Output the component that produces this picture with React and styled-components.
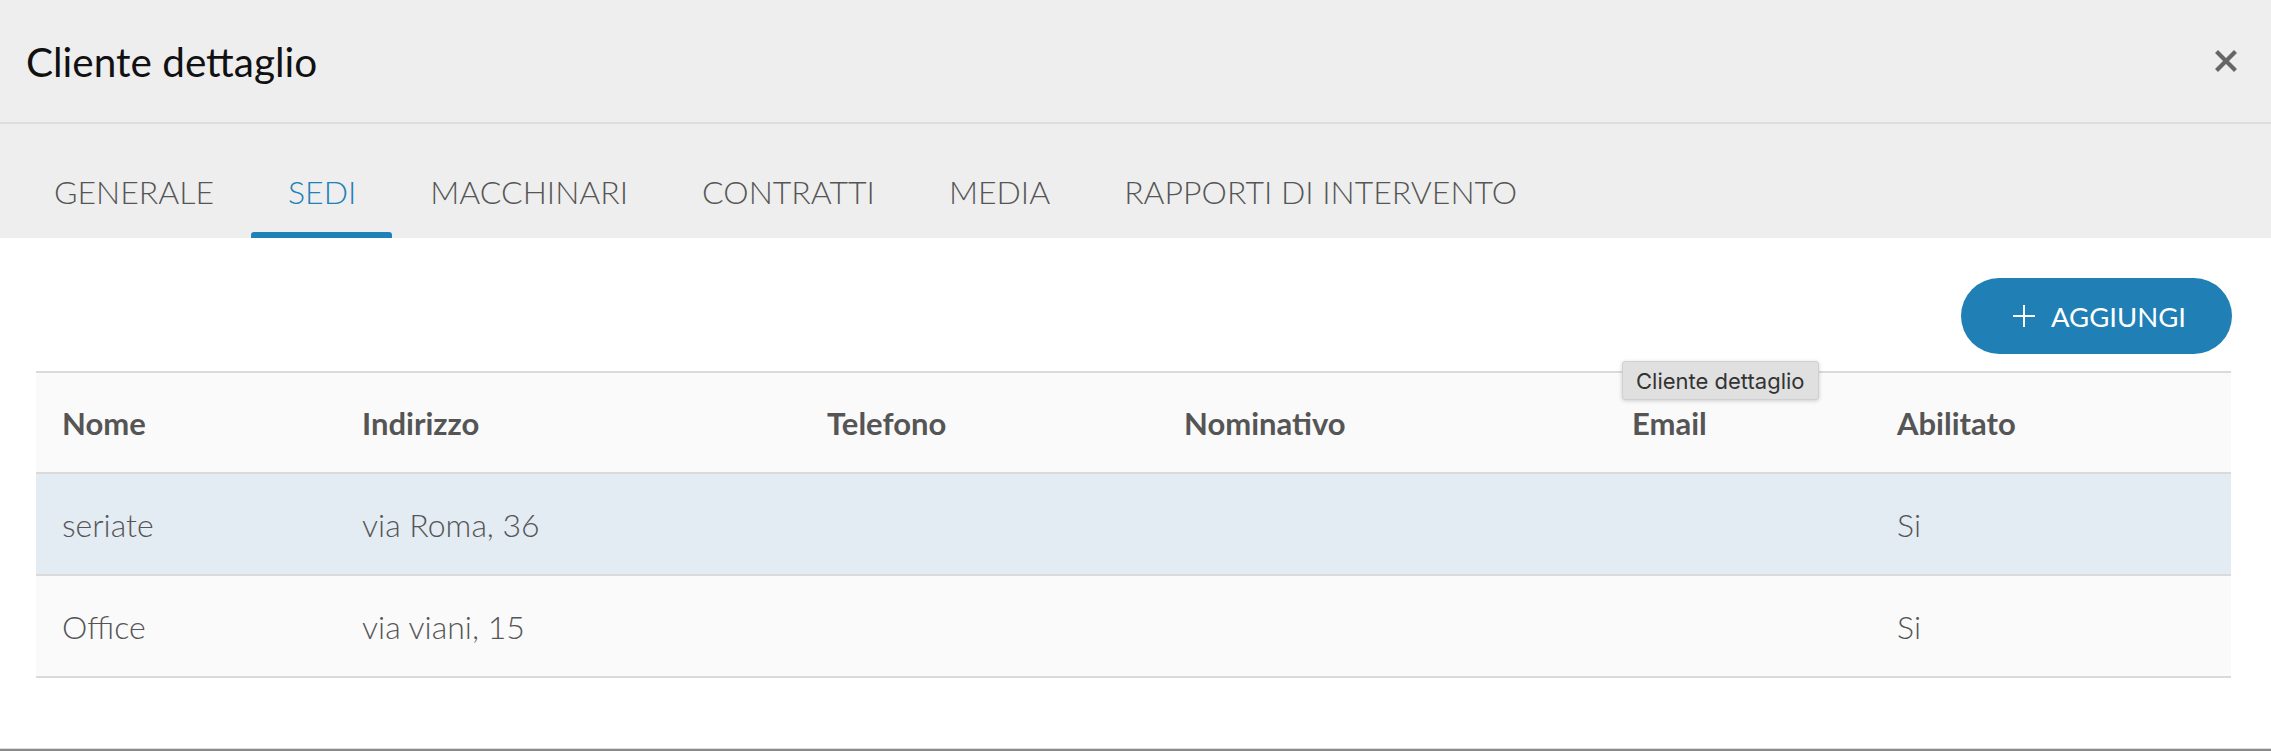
import React from "react";
import styled, { createGlobalStyle } from "styled-components";

const GlobalStyle = createGlobalStyle`
  html, body { margin: 0; padding: 0; background: #ffffff; }
  body { font-family: Lato, "Open Sans", sans-serif; }
  * { box-sizing: border-box; }
`;

const Page = styled.div`
  display: flex;
  flex-direction: column;
  height: 751px;
  background: #ffffff;
`;

const Header = styled.header`
  height: 124px;
  background: #eeeeee;
  border-bottom: 2px solid #dedede;
  display: flex;
  align-items: center;
  justify-content: space-between;
  padding: 0 33px 0 26px;
`;

const Title = styled.h2`
  margin: 0;
  font-family: Lato, sans-serif;
  font-weight: 400;
  font-size: 40.5px;
  color: #111111;
  letter-spacing: 0;
`;

const CloseButton = styled.button`
  border: none;
  background: transparent;
  padding: 0;
  width: 24px;
  height: 24px;
  display: flex;
  align-items: center;
  justify-content: center;
  cursor: pointer;
`;

const TabBar = styled.nav`
  height: 114px;
  background: #eeeeee;
  display: flex;
  align-items: flex-end;
  padding-left: 17px;
`;

const Tab = styled.div`
  position: relative;
  height: 94px;
  padding: 0 37px;
  display: flex;
  align-items: center;
  font-family: Lato, sans-serif;
  font-weight: 300;
  font-size: 32px;
  text-transform: uppercase;
  color: ${(p) => (p.$active ? "#2080b8" : "#555555")};

  &::after {
    content: "";
    display: ${(p) => (p.$active ? "block" : "none")};
    position: absolute;
    left: 0;
    right: 1px;
    bottom: 0;
    height: 6px;
    border-radius: 3px 3px 0 0;
    background: #2080b8;
  }
`;

const Content = styled.main`
  flex: 1;
  display: flex;
  flex-direction: column;
  padding: 40px 40px 0 36px;
`;

const Toolbar = styled.div`
  display: flex;
  justify-content: flex-end;
  margin-right: -1px;
`;

const AddButton = styled.button`
  height: 76px;
  border: none;
  border-radius: 38px;
  background: #2080b5;
  color: #ffffff;
  display: flex;
  align-items: center;
  gap: 16px;
  padding: 0 46px 0 52px;
  font-family: Lato, sans-serif;
  font-weight: 400;
  font-size: 27.5px;
  text-transform: uppercase;
  cursor: pointer;
`;

const TableWrap = styled.div`
  position: relative;
  margin-top: 17px;
`;

const Grid = styled.div`
  display: grid;
  grid-template-columns: 300px 465px 357px 448px 265px 1fr;
  border-top: 2px solid #dadada;
`;

const Row = styled.div`
  display: contents;
`;

const Cell = styled.div`
  height: ${(p) => (p.$head ? "101px" : "102px")};
  display: flex;
  align-items: center;
  padding-left: 26px;
  border-bottom: 2px solid #dadada;
  background: ${(p) => (p.$selected ? "#e3ebf3" : "#fafafa")};
  font-family: Lato, sans-serif;
  font-size: ${(p) => (p.$head ? "31px" : "32px")};
  font-weight: ${(p) => (p.$head ? 700 : 300)};
  color: #555555;
  white-space: nowrap;
`;

const Tooltip = styled.div`
  position: absolute;
  left: 1586px;
  top: -10px;
  height: 39px;
  padding: 0 13px;
  display: flex;
  align-items: center;
  background: #e0e0e0;
  border: 1px solid #d0d0d0;
  border-radius: 3px;
  box-shadow: 0 1px 4px rgba(0, 0, 0, 0.18);
  font-family: Inter, "Liberation Sans", sans-serif;
  font-size: 22px;
  color: #333333;
  white-space: nowrap;
`;

const BottomStrip = styled.div`
  height: 3px;
  border-top: 1px solid #dddddd;
  background: #8a8a8a;
`;

const tabs = ["Generale", "Sedi", "Macchinari", "Contratti", "Media", "Rapporti di intervento"];
const columns = ["Nome", "Indirizzo", "Telefono", "Nominativo", "Email", "Abilitato"];
const rows = [
  { cells: ["seriate", "via Roma, 36", "", "", "", "Si"], selected: true },
  { cells: ["Office", "via viani, 15", "", "", "", "Si"], selected: false },
];

export default function App() {
  return (
    <>
      <GlobalStyle />
      <Page>
        <Header>
          <Title>Cliente dettaglio</Title>
          <CloseButton aria-label="Chiudi">
            <svg width="22" height="22" viewBox="0 0 22 22">
              <path d="M3 3 L19 19 M19 3 L3 19" stroke="#666666" strokeWidth="4.2" strokeLinecap="square" />
            </svg>
          </CloseButton>
        </Header>
        <TabBar>
          {tabs.map((t) => (
            <Tab key={t} $active={t === "Sedi"}>
              {t}
            </Tab>
          ))}
        </TabBar>
        <Content>
          <Toolbar>
            <AddButton>
              <svg width="22" height="22" viewBox="0 0 22 22">
                <path d="M11 0 V22 M0 11 H22" stroke="#ffffff" strokeWidth="2" />
              </svg>
              Aggiungi
            </AddButton>
          </Toolbar>
          <TableWrap>
            <Grid>
              <Row>
                {columns.map((c) => (
                  <Cell key={c} $head>
                    {c}
                  </Cell>
                ))}
              </Row>
              {rows.map((r, i) => (
                <Row key={i}>
                  {r.cells.map((c, j) => (
                    <Cell key={j} $selected={r.selected}>
                      {c}
                    </Cell>
                  ))}
                </Row>
              ))}
            </Grid>
            <Tooltip>Cliente dettaglio</Tooltip>
          </TableWrap>
        </Content>
        <BottomStrip />
      </Page>
    </>
  );
}
